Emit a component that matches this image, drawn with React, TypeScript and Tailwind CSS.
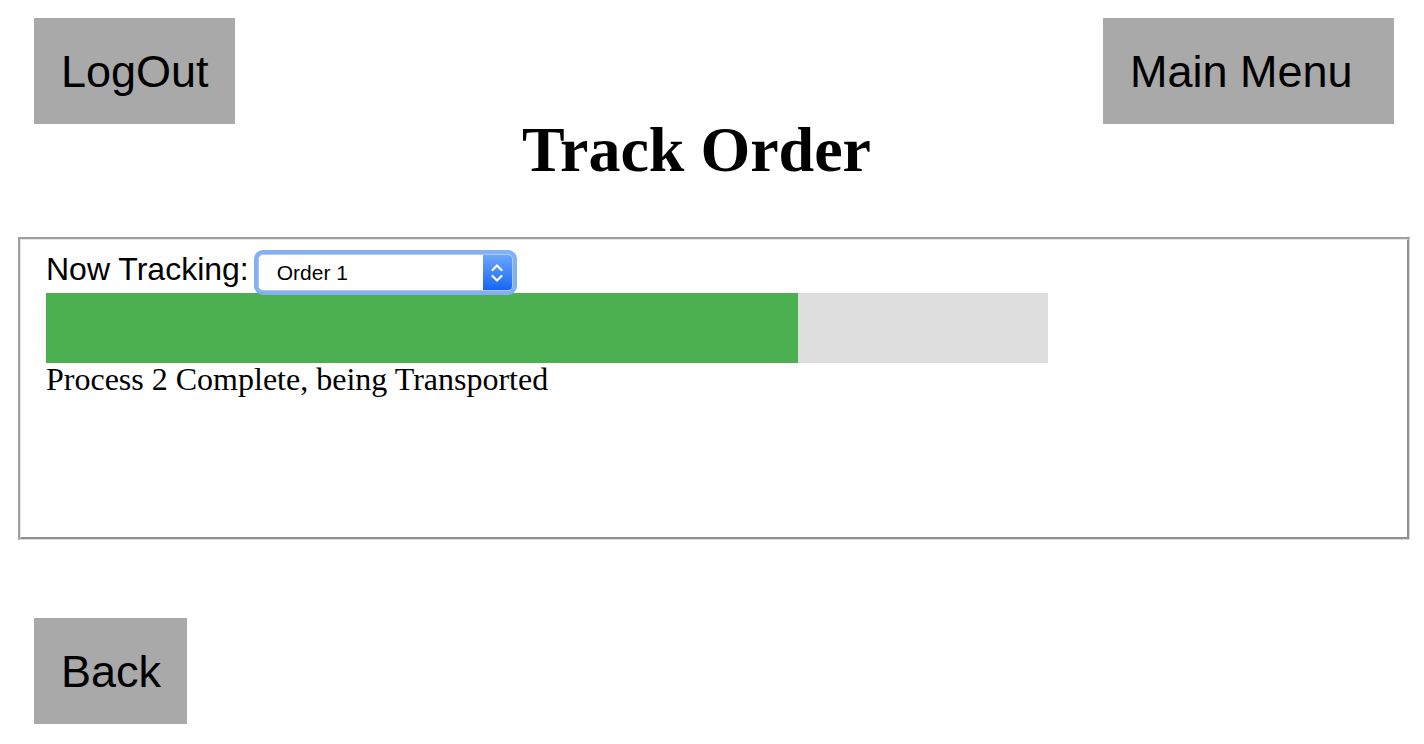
import React from "react";

const sans = "font-['Liberation_Sans',Arial,sans-serif]";
const serif = "font-['Liberation_Serif','Times_New_Roman',serif]";

function GrayButton({ label, width }: { label: string; width: string }) {
  return (
    <button
      className={`flex h-[106px] items-center bg-[#a9a9a9] pl-[27px] text-left text-[45px] leading-none text-black ${sans} ${width}`}
    >
      {label}
    </button>
  );
}

function Stepper() {
  return (
    <svg width="16" height="26" viewBox="0 0 16 26" fill="none">
      <path d="M3.5 10 L8 5.5 L12.5 10" stroke="white" strokeWidth="2.2" strokeLinecap="round" strokeLinejoin="round" />
      <path d="M3.5 16 L8 20.5 L12.5 16" stroke="white" strokeWidth="2.2" strokeLinecap="round" strokeLinejoin="round" />
    </svg>
  );
}

export default function App() {
  const progress = 75;

  return (
    <div className="min-h-[744px] bg-white text-black">
      <header className="flex items-start pl-[34px] pr-[30px] pt-[18px]">
        <GrayButton label="LogOut" width="w-[201px]" />
        <h1 className={`flex-1 pl-[55px] pt-[95px] text-center text-[64px] font-bold leading-[74px] ${serif}`}>
          Track Order
        </h1>
        <GrayButton label="Main Menu" width="w-[291px]" />
      </header>

      <section className="ml-[18px] mr-[14px] mt-[50px] h-[303px] border-b border-l-2 border-r border-t-2 border-b-[#dadada] border-l-[#9f9f9f] border-r-[#dadada] border-t-[#9f9f9f]">
        <div className="h-full border-b-2 border-l border-r-2 border-t border-b-[#8f8f8f] border-l-[#e6e6e6] border-r-[#8f8f8f] border-t-[#e6e6e6] pl-[25px] pt-[12px]">
          <div className="flex h-[41px] items-start">
            <span className={`text-[32px] leading-[35px] ${sans}`}>Now Tracking:</span>
            <div className="ml-[5px] -mt-[2px] rounded-[9px] bg-[#80b0f6] p-[4px]">
              <div className="flex h-[37px] w-[255px] items-stretch overflow-hidden rounded-[5px] border border-[#b9c6d8] bg-white">
                <span className={`flex flex-1 items-center pl-[18px] text-[21px] leading-none ${sans}`}>
                  Order 1
                </span>
                <span className="flex w-[29px] items-center justify-center bg-gradient-to-b from-[#6aa6fb] to-[#1466f6]">
                  <Stepper />
                </span>
              </div>
            </div>
          </div>

          <div className="h-[70px] w-[1002px] bg-[#dddddd]">
            <div className="h-full bg-[#4caf50]" style={{ width: `${progress}%` }} />
          </div>

          <p className={`text-[32px] leading-[32px] ${serif}`}>Process 2 Complete, being Transported</p>
        </div>
      </section>

      <div className="pl-[34px] pt-[78px] pb-[20px]">
        <GrayButton label="Back" width="w-[153px]" />
      </div>
    </div>
  );
}
